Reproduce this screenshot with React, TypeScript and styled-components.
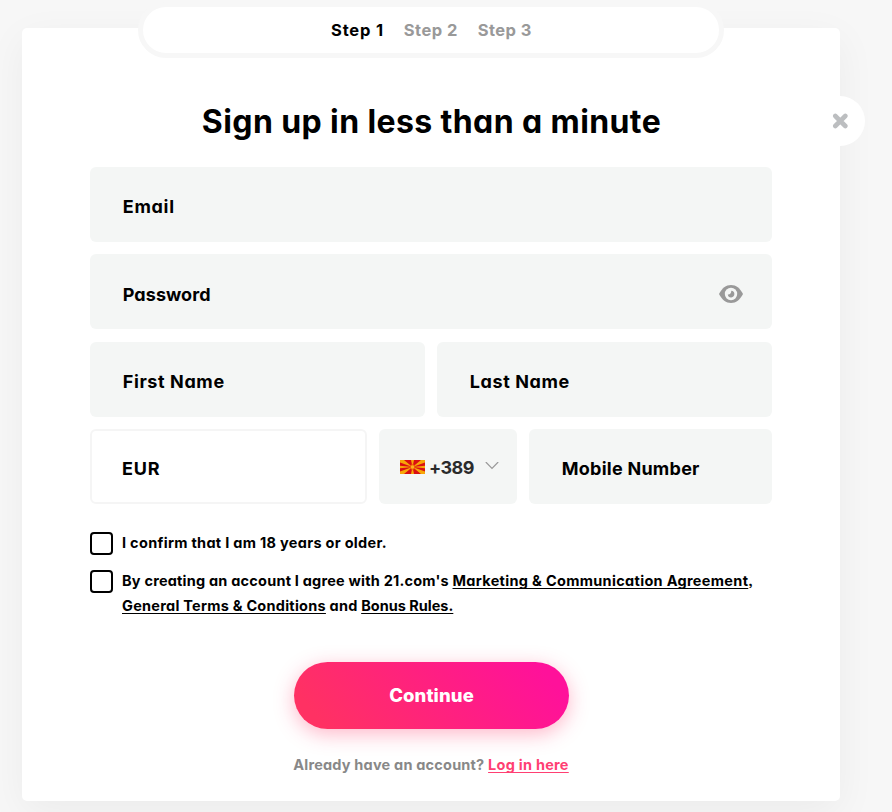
import React from 'react';
import styled, { createGlobalStyle, css } from 'styled-components';

const GlobalStyle = createGlobalStyle`
  * { box-sizing: border-box; }
  body {
    margin: 0;
    background: #f7f7f7;
    color: #000;
    font-family: Inter, sans-serif;
    font-weight: 700;
    font-feature-settings: 'cv11', 'ss03';
    overflow: hidden;
  }
`;

const Page = styled.main`
  height: 812px;
  padding: 28px 52px 0 22px;
  overflow: hidden;
`;

const Card = styled.section`
  position: relative;
  width: 818px;
  height: 773px;
  padding: 73px 68px 0;
  border-radius: 5px;
  background: #fff;
  box-shadow: 0 11px 40px rgba(0, 8, 4, 0.05);
`;

const Steps = styled.nav`
  position: absolute;
  top: -26px;
  left: 116px;
  width: 586px;
  height: 56px;
  border: 5px solid #f7f7f7;
  border-radius: 28px;
  background: #fff;
  display: flex;
  justify-content: center;
  padding-left: 1px;
  gap: 20px;
  line-height: 47px;
  font-size: 16.5px;
`;

const Step = styled.span<{ $active?: boolean }>`
  color: ${p => (p.$active ? '#000' : '#999')};
  letter-spacing: ${p => (p.$active ? '0.8px' : '0.45px')};
`;

const CloseButton = styled.button`
  position: absolute;
  top: 68px;
  right: -25px;
  width: 50px;
  height: 50px;
  padding: 0;
  border: 0;
  border-radius: 50%;
  background: #fff;
  display: grid;
  place-items: center;
`;

const Title = styled.h1`
  height: 48px;
  margin: 0 0 18px;
  padding-left: 1px;
  font-size: 32px;
  line-height: 41px;
  letter-spacing: 0.4px;
  text-align: center;
  white-space: nowrap;
`;

const Form = styled.form`
  display: flex;
  flex-direction: column;
`;

const Fields = styled.div`
  display: grid;
  grid-auto-rows: 75px;
  row-gap: 12.4px;
`;

const FieldRow = styled.div<{ $columns: string }>`
  display: grid;
  grid-template-columns: ${p => p.$columns};
  column-gap: 12px;
`;

const Field = styled.label<{ $outlined?: boolean; $spacing: number }>`
  display: flex;
  align-items: center;
  justify-content: space-between;
  padding: 4.5px 28px 0 32.8px;
  border-radius: 6px;
  background: #f4f6f5;
  font-size: 18px;
  letter-spacing: ${p => p.$spacing}px;
  ${p =>
    p.$outlined &&
    css`
      padding-left: 30px;
      border: 2px solid #f5f5f5;
      background: #fff;
    `}
`;

const DialCode = styled.div`
  display: flex;
  align-items: center;
  padding: 0 18px 0 21px;
  border-radius: 6px;
  background: #f4f6f5;
  color: #2b2b2b;
  font-size: 18px;
  font-weight: 650;
  letter-spacing: -0.6px;

  span {
    margin-left: 4px;
    margin-right: auto;
    padding-top: 2px;
  }
`;

const Checks = styled.div`
  margin-top: 26px;
  display: grid;
  row-gap: 13px;
  font-size: 14.5px;
  line-height: 25px;
`;

const Check = styled.label<{ $spacing: number }>`
  display: flex;
  gap: 9px;
  letter-spacing: ${p => p.$spacing}px;
  white-space: nowrap;
`;

const Box = styled.span`
  flex: none;
  width: 23px;
  height: 23px;
  margin-top: 2px;
  border: 2px solid #000;
  border-radius: 4px;
`;

const Link = styled.a<{ $spacing?: number }>`
  text-decoration: underline;
  text-decoration-thickness: 1px;
  text-underline-offset: 1.5px;
  text-decoration-skip-ink: none;
  letter-spacing: ${p => p.$spacing}px;
`;

const Submit = styled.button`
  align-self: center;
  width: 275px;
  height: 67px;
  margin-top: 44px;
  padding: 0 0 1px 1px;
  border: 0;
  border-radius: 34px;
  background: linear-gradient(50deg, #ff3163 10%, #ff119a 90%);
  box-shadow: 0 5px 20px rgba(255, 49, 99, 0.35);
  color: #fff;
  font: 800 18.5px Inter, sans-serif;
  letter-spacing: 0.1px;
`;

const Footer = styled.p`
  margin: 24px 0 0;
  font-size: 14.5px;
  line-height: 24px;
  letter-spacing: 0.2px;
  text-align: center;
  color: #888;

  a { color: #ff3f73; }
`;

const CloseIcon = () => (
  <svg width="16" height="16" viewBox="0 0 16 16" stroke="#bcbec0" strokeWidth="4.6" strokeLinecap="round">
    <path d="M3.300 3l10 10M13.300 3L3.300 13" />
  </svg>
);

const EyeIcon = () => (
  <svg width="26" height="20" viewBox="0 0 26 20">
    <path d="M1 10C4 4.200 8 1 13 1s9 3.200 12 9c-3 5.800-7 9-12 9S4 15.800 1 10z" fill="#999" />
    <circle cx="13" cy="10" r="6.200" fill="#f4f6f5" />
    <path d="M13.300 6.800a3.300 3.300 0 1 1-3.500 3.700c2 .3 3.600-1.400 3.500-3.700z" fill="#999" />
  </svg>
);

const FlagIcon = () => (
  <svg width="25" height="14" viewBox="0 0 25 14">
    <rect width="25" height="14" fill="#d90f12" />
    <path
      d="M0 0h4l8.500 7L0 2.500zM25 0h-4l-8.500 7L25 2.500zM0 14h4l8.500-7L0 11.500zM25 14h-4l-8.500-7L25 11.500zM0 5.700v2.600L12.500 7zM25 5.700v2.600L12.500 7zM11 0h3l-1.500 7zM11 14h3l-1.500-7z"
      fill="#f7a707"
    />
    <circle cx="12.500" cy="7" r="2.800" fill="#ee5b0c" />
    <circle cx="12.500" cy="7" r="1.700" fill="#fbb51a" />
  </svg>
);

const ChevronIcon = () => (
  <svg width="14" height="9" viewBox="0 0 14 9" fill="none" stroke="#999" strokeWidth="1.200">
    <path d="M.8 0L7 6.300 13.200 0" />
  </svg>
);

export default function App() {
  return (
    <Page>
      <GlobalStyle />
      <Card>
        <Steps>
          <Step $active>Step 1</Step>
          <Step>Step 2</Step>
          <Step>Step 3</Step>
        </Steps>
        <CloseButton type="button" aria-label="Close">
          <CloseIcon />
        </CloseButton>
        <Title>Sign up in less than a minute</Title>
        <Form>
          <Fields>
            <Field $spacing={0.7}>Email</Field>
            <Field $spacing={0.05}>
              Password
              <EyeIcon />
            </Field>
            <FieldRow $columns="1fr 1fr">
              <Field $spacing={0.6}>First Name</Field>
              <Field $spacing={0.6}>Last Name</Field>
            </FieldRow>
            <FieldRow $columns="277px 138px 1fr">
              <Field $outlined $spacing={0.8}>EUR</Field>
              <DialCode>
                <FlagIcon />
                <span>+389</span>
                <ChevronIcon />
              </DialCode>
              <Field $spacing={0.25}>Mobile Number</Field>
            </FieldRow>
          </Fields>
          <Checks>
            <Check $spacing={0.3}>
              <Box />
              <span>I confirm that I am 18 years or older.</span>
            </Check>
            <Check $spacing={0.21}>
              <Box />
              <span>
                By creating an account I agree with 21.com's{' '}
                <Link $spacing={0.32}>Marketing &amp; Communication Agreement</Link>,
                <br />
                <Link $spacing={0.25}>General Terms &amp; Conditions</Link> and <Link $spacing={0}>Bonus Rules.</Link>
              </span>
            </Check>
          </Checks>
          <Submit type="button">Continue</Submit>
        </Form>
        <Footer>
          Already have an account? <Link $spacing={0.25}>Log in here</Link>
        </Footer>
      </Card>
    </Page>
  );
}
